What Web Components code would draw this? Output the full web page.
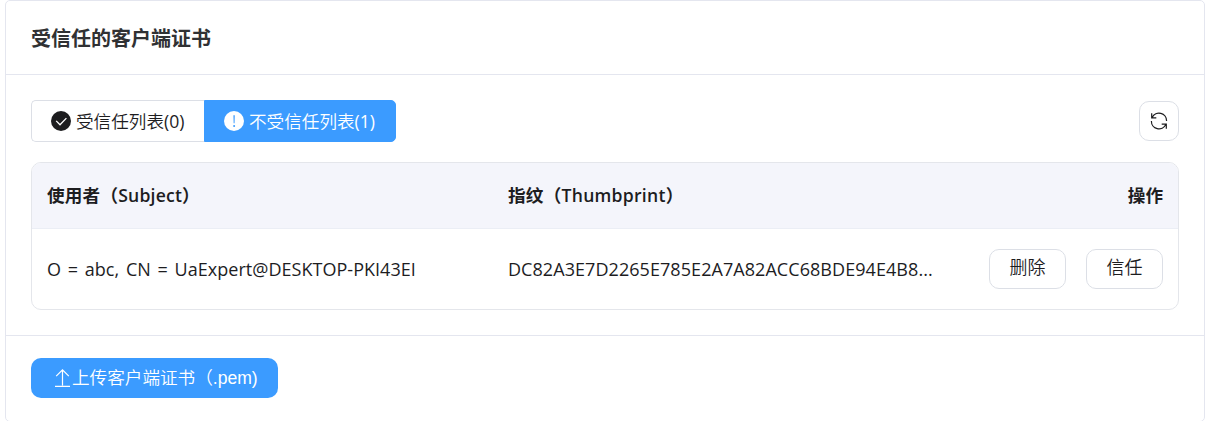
<!DOCTYPE html>
<html lang="zh-CN">
<head>
<meta charset="utf-8">
<title>受信任的客户端证书</title>
<style>
html,body{margin:0;height:421px;overflow:hidden;background:#fff}
body{font-family:"Open Sans","Noto Sans CJK SC",sans-serif;font-size:17.6px;line-height:24px;color:#1d1d1f}
.n{font-weight:400}
.cell{font-size:18px}
</style>
</head>
<body>
<cert-card>
  <card-title slot="title">受信任的客户端证书</card-title>
  <cert-toolbar>
    <tab-item>
      <svg slot="icon" width="20" height="20" viewBox="0 0 20 20"><circle cx="10" cy="10" r="10" fill="#1d1d1f"/><path d="M5.2 9.9 9 13.7l6.4-6.6" fill="none" stroke="#fff" stroke-width="1.3"/></svg>
      受信任列表<span class="n">(0)</span></tab-item>
    <tab-item active>
      <svg slot="icon" width="20" height="20" viewBox="0 0 20 20"><circle cx="10" cy="10" r="10" fill="#fff"/><path d="M9.4 4.3h1.4l-.25 8h-.9z" fill="#3b9bff"/><circle cx="10.1" cy="14.9" r="1" fill="#3b9bff"/></svg>
      不受信任列表<span class="n">(1)</span></tab-item>
    <icon-button slot="end"></icon-button>
  </cert-toolbar>
  <cert-table>
    <span slot="h1" style="letter-spacing:.2px">使用者（Subject）</span>
    <span slot="h2" style="letter-spacing:.25px">指纹（Thumbprint）</span>
    <span slot="h3">操作</span>
    <span slot="c1" class="n cell" style="letter-spacing:.03px;word-spacing:2px">O = abc, CN = UaExpert@DESKTOP-PKI43EI</span>
    <span slot="c2" class="n cell" style="letter-spacing:.06px">DC82A3E7D2265E785E2A7A82ACC68BDE94E4B8...</span>
    <plain-button slot="c3">删除</plain-button>
    <plain-button slot="c3">信任</plain-button>
  </cert-table>
  <upload-button slot="footer">上传客户端证书（.pem)</upload-button>
</cert-card>
<script>
function define(name, html) {
  const t = document.createElement('template');
  t.innerHTML = html;
  customElements.define(name, class extends HTMLElement {
    constructor() {
      super();
      this.attachShadow({mode: 'open'}).append(t.content.cloneNode(true));
    }
  });
}
define('cert-card', `<style>
:host{display:block;box-sizing:border-box;height:422px;margin-left:5px;border:1px solid #e4e6ef;border-radius:5px;background:#fff}
header{box-sizing:border-box;height:74px;padding:2px 25px 0;display:flex;align-items:center;border-bottom:1px solid #e4e6ef}
main{box-sizing:border-box;height:261px;padding:25px 25px 0;border-bottom:1px solid #e4e6ef}
footer{padding:22px 25px}
</style><header><slot name="title"></slot></header><main><slot></slot></main><footer><slot name="footer"></slot></footer>`);
define('card-title', `<style>:host{display:block;font-size:20px;font-weight:600;line-height:28px;color:#303133}</style><slot></slot>`);
define('cert-toolbar', `<style>
:host{display:flex;justify-content:space-between;align-items:center;height:42px}
.tabs{display:flex}
</style><div class="tabs"><slot></slot></div><slot name="end"></slot>`);
define('tab-item', `<style>
:host{display:flex;box-sizing:border-box;align-items:center;gap:5px;width:173px;height:42px;padding-left:19px;border:1px solid #dcdfe6;border-right:0;border-radius:5px 0 0 5px;font-weight:350;white-space:nowrap}
:host([active]){width:192px;padding-left:19px;border:1px solid #3b9bff;border-radius:0 5px 5px 0;background:#3b9bff;color:#fff}
::slotted(svg){display:block}
span{white-space:nowrap}
</style><slot name="icon"></slot><span><slot></slot></span>`);
define('icon-button', `<style>
:host{display:flex;box-sizing:border-box;width:40px;height:40px;align-items:center;justify-content:center;border:1px solid #dcdfe6;border-radius:10px}
</style><svg width="18" height="18" viewBox="0 0 18 18" fill="none" stroke="#1d1d1f" stroke-width="1.2"><path d="M2.2 5.4A7.6 7.6 0 0 1 16.6 9M1.4 9A7.6 7.6 0 0 0 15.8 12.6M1.7 1.2V5.8H6.3M16.3 16.8V12.2H11.7"/></svg>`);
define('cert-table', `<style>
:host{display:block;box-sizing:border-box;height:148px;margin-top:20px;border:1px solid #e4e6eb;border-radius:10px;overflow:hidden}
.row{display:grid;box-sizing:border-box;grid-template-columns:461px 1fr auto;align-items:center;padding:0 15px;white-space:nowrap}
.head{height:66px;padding-bottom:2px;background:#f4f5fb;border-bottom:1px solid #ebeef5;font-weight:600}
.body{height:80px;font-weight:350}
.actions{display:flex;gap:20px}
</style><div class="row head"><slot name="h1"></slot><slot name="h2"></slot><slot name="h3"></slot></div>
<div class="row body"><slot name="c1"></slot><slot name="c2"></slot><div class="actions"><slot name="c3"></slot></div></div>`);
define('plain-button', `<style>
:host{display:flex;box-sizing:border-box;width:77px;height:40px;align-items:center;justify-content:center;padding-bottom:4px;border:1px solid #dcdfe6;border-radius:10px;font-size:18px}
</style><slot></slot>`);
define('upload-button', `<style>
:host{display:flex;box-sizing:border-box;width:247px;height:40px;align-items:center;padding-left:23px;gap:1px;border-radius:10px;background:#3b9bff;color:#fff;font-family:"Liberation Sans","Noto Sans CJK SC",sans-serif;font-weight:350;white-space:nowrap}
</style><svg width="17" height="20" viewBox="0 0 17 20" fill="none" stroke="#fff" stroke-width="1.2"><path d="M8.5 17.5V2M2.2 8.1 8.5 1.8l6.3 6.3M1 18.4h15"/></svg><span><slot></slot></span>`);
</script>
</body>
</html>
